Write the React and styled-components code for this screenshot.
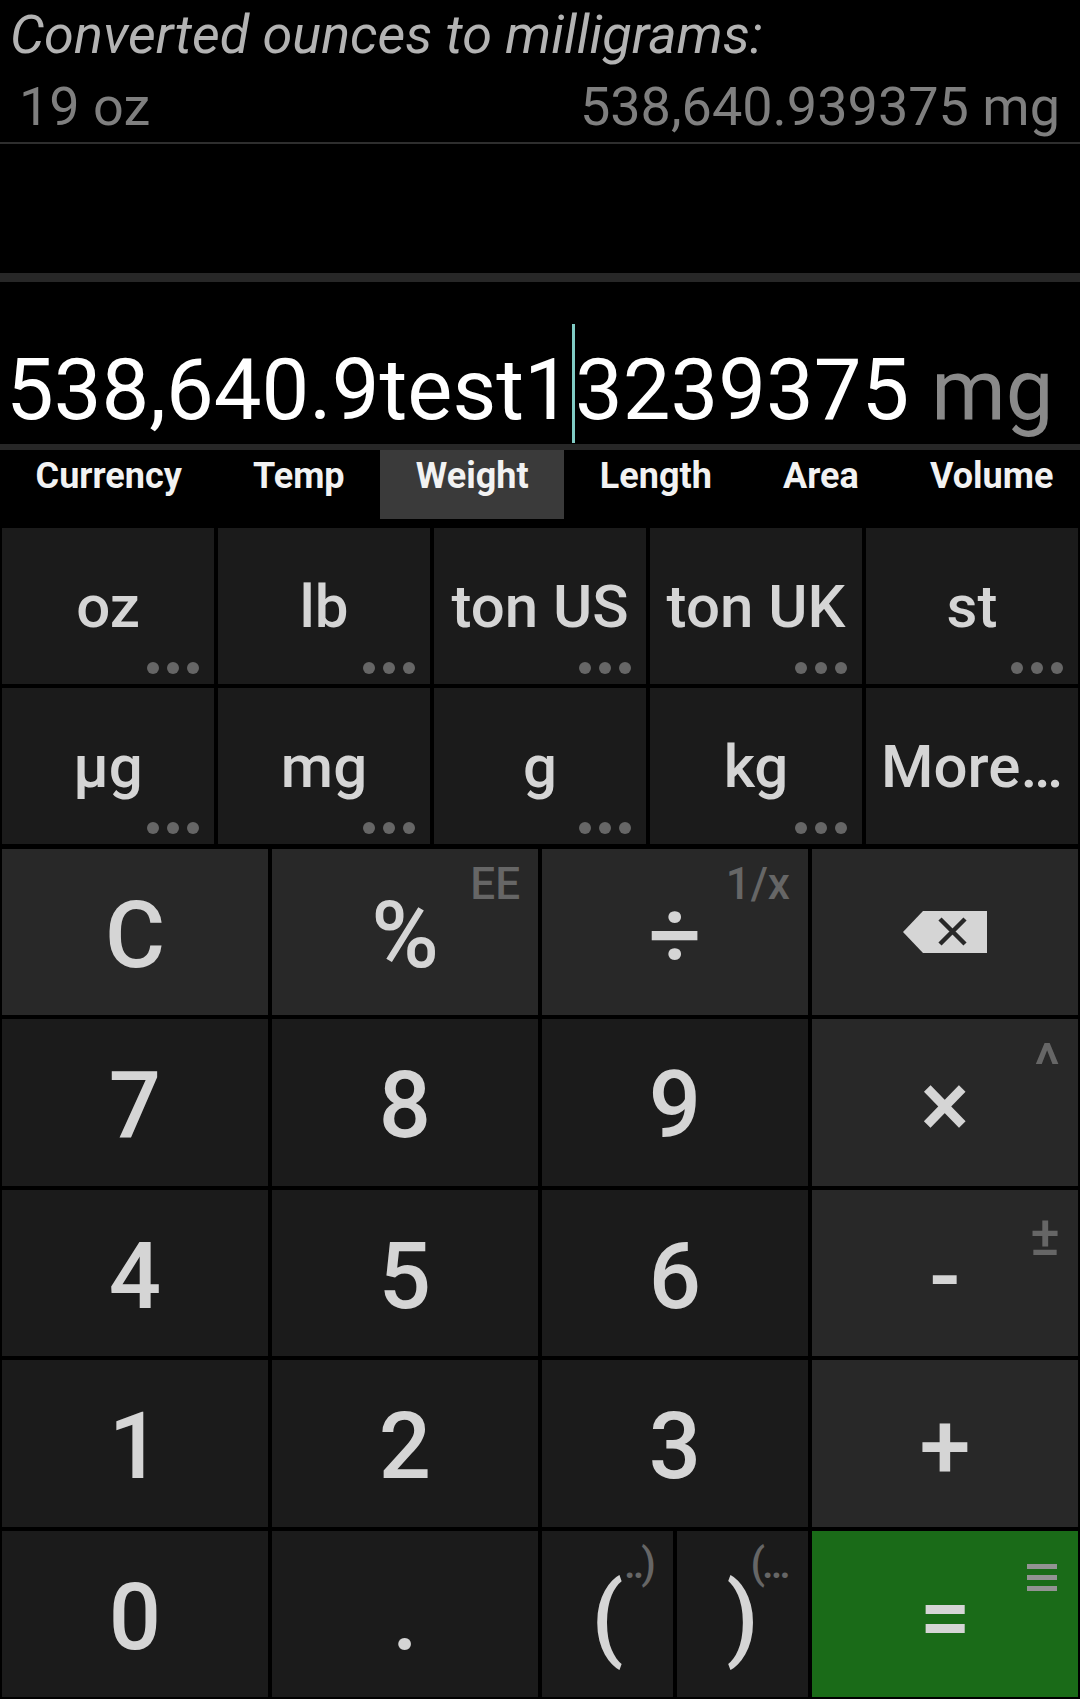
import styled, { createGlobalStyle } from "styled-components";

const GlobalStyle = createGlobalStyle`
  html, body {
    margin: 0;
    padding: 0;
    background: #000;
  }
  body {
    font-family: Roboto, "Noto Sans", sans-serif;
  }
`;

const tabs = ["Currency", "Temp", "Weight", "Length", "Area", "Volume"];

const units = [
  { label: "oz", more: true },
  { label: "lb", more: true },
  { label: "ton US", more: true },
  { label: "ton UK", more: true },
  { label: "st", more: true },
  { label: "µg", more: true },
  { label: "mg", more: true },
  { label: "g", more: true },
  { label: "kg", more: true },
  { label: "More…", more: false },
];

const keys = [
  { label: "C", tone: "op" },
  { label: "%", tone: "op", sup: "EE" },
  { label: "÷", tone: "op", sup: "1/x" },
  { icon: "back", tone: "op" },
  { label: "7" },
  { label: "8" },
  { label: "9" },
  { label: "×", tone: "op", sup: "^", supSize: 60, supTop: 16 },
  { label: "4" },
  { label: "5" },
  { label: "6" },
  { label: "-", tone: "op", sup: "±", supSize: 56, supTop: 18 },
  { label: "1" },
  { label: "2" },
  { label: "3" },
  { label: "+", tone: "op" },
  { label: "0" },
  { label: "." },
  { parens: true },
  { label: "=", tone: "go", icon: "menu" },
];

const tones = {
  num: "#1b1b1b",
  op: "#282828",
  go: "#1a6b18",
};

const BackspaceIcon = () => (
  <IconWrap>
    <svg width="84" height="42" viewBox="0 0 84 42">
      <path d="M0 21 L20 0 H84 V42 H20 Z" fill="#d5d5d5" />
      <path
        d="M37 8 L62 33 M62 8 L37 33"
        stroke="#282828"
        strokeWidth="4.5"
        fill="none"
      />
    </svg>
  </IconWrap>
);

const MenuIcon = () => (
  <svg width="30" height="27" viewBox="0 0 30 27">
    <rect x="0" y="0" width="30" height="5" fill="#939393" />
    <rect x="0" y="11" width="30" height="5" fill="#939393" />
    <rect x="0" y="22" width="30" height="5" fill="#939393" />
  </svg>
);

const App = () => {
  return (
    <Screen>
      <GlobalStyle />
      <History>
        <HistoryTitle>Converted ounces to milligrams:</HistoryTitle>
        <HistoryRow>
          <span>19 oz</span>
          <span>538,640.939375 mg</span>
        </HistoryRow>
      </History>
      <Spacer />
      <Band $h={9} />
      <Display>
        <BigNumber>538,640.9test1</BigNumber>
        <Cursor />
        <BigNumber>3239375</BigNumber>
        <BigUnit>mg</BigUnit>
      </Display>
      <Band $h={6} />
      <TabBar>
        {tabs.map((t) => (
          <Tab key={t} $active={t === "Weight"}>
            {t}
          </Tab>
        ))}
      </TabBar>
      <UnitGrid>
        {units.map((u) => (
          <UnitKey key={u.label}>
            {u.label}
            {u.more && (
              <Dots>
                <span />
                <span />
                <span />
              </Dots>
            )}
          </UnitKey>
        ))}
      </UnitGrid>
      <KeyGrid>
        {keys.map((k, i) => {
          if (k.parens) {
            return (
              <ParenPair key={i}>
                <Key $tone="num">
                  (<Sup $size={42} $top={12} $tight>..)</Sup>
                </Key>
                <Key $tone="num">
                  )<Sup $size={42} $top={12} $tight>(...</Sup>
                </Key>
              </ParenPair>
            );
          }
          return (
            <Key key={i} $tone={k.tone || "num"}>
              {k.icon === "back" ? <BackspaceIcon /> : k.label}
              {k.sup && (
                <Sup $size={k.supSize} $top={k.supTop}>
                  {k.sup}
                </Sup>
              )}
              {k.icon === "menu" && (
                <MenuSpot>
                  <MenuIcon />
                </MenuSpot>
              )}
            </Key>
          );
        })}
      </KeyGrid>
    </Screen>
  );
};

const Screen = styled.div`
  width: 1080px;
  height: 1699px;
  background: #000;
  display: flex;
  flex-direction: column;
  overflow: hidden;
`;

const History = styled.div`
  padding: 5px 0 5px;
  border-bottom: 2px solid #2e2e2e;
`;

const HistoryTitle = styled.div`
  padding-left: 10px;
  font-style: italic;
  font-size: 54px;
  line-height: 60px;
  color: #b3b3b3;
  white-space: nowrap;
`;

const HistoryRow = styled.div`
  margin-top: 12px;
  display: flex;
  justify-content: space-between;
  padding: 0 20px 0 19px;
  font-size: 54px;
  line-height: 60px;
  color: #7f7f7f;
  white-space: nowrap;
`;

const Spacer = styled.div`
  height: 129px;
`;

const Band = styled.div`
  height: ${(p) => p.$h}px;
  background: #272727;
`;

const Display = styled.div`
  height: 162px;
  display: flex;
  align-items: flex-end;
  padding-left: 6px;
  white-space: pre;
`;

const BigNumber = styled.span`
  font-size: 85px;
  line-height: 1;
  padding-bottom: 11px;
  color: #fff;
`;

const BigUnit = styled(BigNumber)`
  color: #8a8a8a;
  margin-left: 22px;
`;

const Cursor = styled.span`
  width: 3px;
  height: 119px;
  margin-bottom: 1px;
  background: #80cbc4;
`;

const TabBar = styled.div`
  height: 70px;
  width: 1089px;
  display: flex;
`;

const Tab = styled.div`
  flex: 1 1 auto;
  height: 69px;
  box-sizing: border-box;
  padding-top: 8px;
  text-align: center;
  font-size: 36px;
  font-weight: 700;
  line-height: 1;
  color: #f2f2f2;
  background: ${(p) => (p.$active ? "#3a3a3a" : "transparent")};
`;

const UnitGrid = styled.div`
  margin-top: 8px;
  display: grid;
  grid-template-columns: repeat(5, 1fr);
  grid-auto-rows: 156px;
  gap: 4px;
  padding: 0 2px;
`;

const UnitKey = styled.div`
  position: relative;
  background: #1b1b1b;
  display: flex;
  align-items: center;
  justify-content: center;
  font-size: 60px;
  font-weight: 500;
  color: #d5d5d5;
  white-space: nowrap;
`;

const Dots = styled.div`
  position: absolute;
  right: 15px;
  bottom: 10px;
  display: flex;
  gap: 8px;
  span {
    width: 12px;
    height: 12px;
    border-radius: 50%;
    background: #666;
  }
`;

const KeyGrid = styled.div`
  margin-top: 5px;
  height: 848px;
  display: grid;
  grid-template-columns: repeat(4, 1fr);
  grid-template-rows: repeat(5, 1fr);
  gap: 4px;
  padding: 0 2px;
`;

const ParenPair = styled.div`
  display: grid;
  grid-template-columns: 1fr 1fr;
  gap: 4px;
`;

const Key = styled.div`
  position: relative;
  box-sizing: border-box;
  padding-top: 8px;
  background: ${(p) => tones[p.$tone]};
  display: flex;
  align-items: center;
  justify-content: center;
  font-size: 92px;
  font-weight: 500;
  line-height: 0.7;
  color: #d5d5d5;
`;

const IconWrap = styled.span`
  display: flex;
  margin-top: -8px;
`;

const Sup = styled.span`
  position: absolute;
  top: ${(p) => p.$top ?? 13}px;
  right: ${(p) => (p.$tight ? 20 : 18)}px;
  font-size: ${(p) => p.$size ?? 44}px;
  font-weight: 500;
  line-height: 1;
  letter-spacing: ${(p) => (p.$tight ? "-3px" : "0")};
  color: #666;
  white-space: nowrap;
`;

const MenuSpot = styled.span`
  position: absolute;
  top: 33px;
  right: 21px;
  display: flex;
`;

export default App;
